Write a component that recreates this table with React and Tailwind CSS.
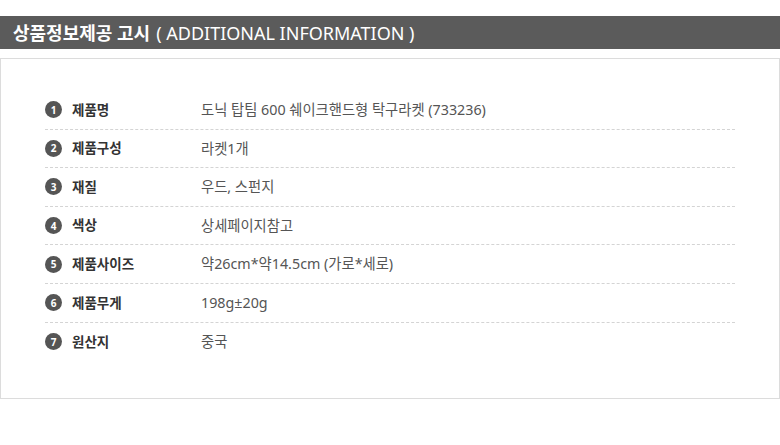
const rows = [
  ['제품명', '도닉 탑팀 600 쉐이크핸드형 탁구라켓 (733236)'],
  ['제품구성', '라켓1개'],
  ['재질', '우드, 스펀지'],
  ['색상', '상세페이지참고'],
  ['제품사이즈', '약26cm*약14.5cm (가로*세로)'],
  ['제품무게', '198g±20g'],
  ['원산지', '중국'],
];

export default function App() {
  return (
    <div className="w-[780px] h-[445px] bg-white pt-4 font-['Noto_Sans','Noto_Sans_CJK_KR',sans-serif]">
      <div className="h-[33px] bg-[#5b5b5b] flex items-center pl-[13px] text-white text-[18px] leading-none">
        <span className="font-bold">상품정보제공 고시</span>
        <span className="ml-[6px]">( ADDITIONAL INFORMATION )</span>
      </div>
      <div className="mt-[9px] h-[341px] border border-[#dcdcdc] pt-[32px] px-[44px]">
        {rows.map(([label, value], i) => (
          <div
            key={label}
            className={
              'h-[38.6px] flex items-center ' +
              (i < rows.length - 1 ? 'border-b border-dashed border-[#d4d4d4]' : '')
            }
          >
            <span className="w-[17px] h-[17px] rounded-full bg-[#555] text-white text-[10px] font-bold flex items-center justify-center leading-none">
              {i + 1}
            </span>
            <span className="ml-[10px] w-[129px] text-[13.5px] font-bold text-[#333]">{label}</span>
            <span className="text-[14.3px] text-[#555]">{value}</span>
          </div>
        ))}
      </div>
    </div>
  );
}
